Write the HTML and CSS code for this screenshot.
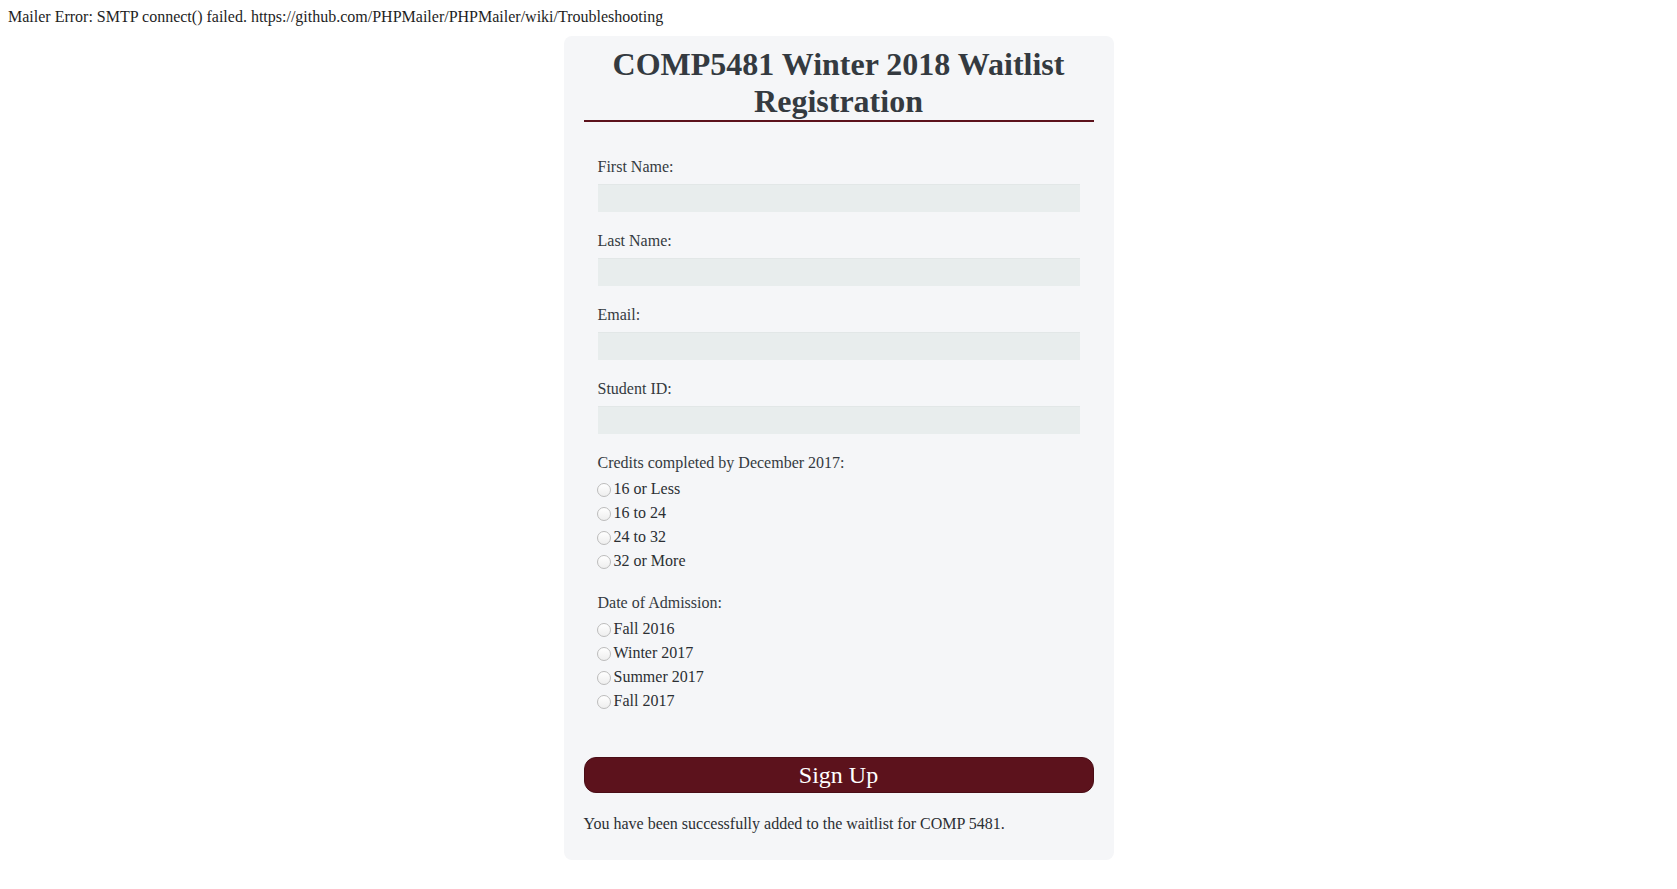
FILE: index.html
```html
<!DOCTYPE html>
<html lang="en">
<head>
<meta charset="utf-8">
<title>COMP5481 Winter 2018 Waitlist Registration</title>
<link rel="stylesheet" href="styles.css">
</head>
<body>
<div class="error">Mailer Error: SMTP connect() failed. https://github.com/PHPMailer/PHPMailer/wiki/Troubleshooting</div>
<div class="card">
  <h1 class="title">COMP5481 Winter 2018 Waitlist Registration</h1>
  <form class="form">
    <div class="fields">
      <label class="field-label" for="fn">First Name:</label>
      <input class="text-input" id="fn" type="text">
      <label class="field-label" for="ln">Last Name:</label>
      <input class="text-input" id="ln" type="text">
      <label class="field-label" for="em">Email:</label>
      <input class="text-input" id="em" type="text">
      <label class="field-label" for="sid">Student ID:</label>
      <input class="text-input" id="sid" type="text">

      <div class="group-label">Credits completed by December 2017:</div>
      <div class="radio-group">
        <label class="radio-row"><input class="radio" type="radio" name="credits">16 or Less</label>
        <label class="radio-row"><input class="radio" type="radio" name="credits">16 to 24</label>
        <label class="radio-row"><input class="radio" type="radio" name="credits">24 to 32</label>
        <label class="radio-row"><input class="radio" type="radio" name="credits">32 or More</label>
      </div>

      <div class="group-label">Date of Admission:</div>
      <div class="radio-group">
        <label class="radio-row"><input class="radio" type="radio" name="adm">Fall 2016</label>
        <label class="radio-row"><input class="radio" type="radio" name="adm">Winter 2017</label>
        <label class="radio-row"><input class="radio" type="radio" name="adm">Summer 2017</label>
        <label class="radio-row"><input class="radio" type="radio" name="adm">Fall 2017</label>
      </div>
    </div>
    <button class="submit" type="button">Sign Up</button>
  </form>
  <p class="success">You have been successfully added to the waitlist for COMP 5481.</p>
</div>
</body>
</html>
```

FILE: styles.css
```css
html, body {
  margin: 0;
  padding: 0;
  background: #ffffff;
}

body {
  padding: 8px;
  font-family: "Liberation Serif", "Times New Roman", serif;
  font-size: 16px;
  color: #1e1e1e;
}

.error {
  line-height: 18px;
  height: 18px;
}

.card {
  width: 550px;
  box-sizing: border-box;
  margin: 10px auto 0;
  padding: 10px 20px 24px;
  background: #f5f6f8;
  border-radius: 8px;
  color: #343a40;
}

.title {
  margin: 0;
  font-size: 32px;
  line-height: 37px;
  font-weight: bold;
  text-align: center;
  color: #343a40;
  border-bottom: 2px solid #5c121c;
}

.form {
  margin: 0;
  display: flex;
  flex-direction: column;
}

.fields {
  display: flex;
  flex-direction: column;
  padding: 33px 14px 0;
}

.field-label {
  display: block;
  line-height: 24px;
}

.text-input {
  display: block;
  height: 28px;
  box-sizing: border-box;
  margin: 5px 0 17px;
  padding: 0 6px;
  border: none;
  border-top: 1px solid #e2e7e7;
  background: #e8eded;
  font-family: inherit;
  font-size: 16px;
  outline: none;
}

.group-label {
  line-height: 24px;
  margin-bottom: 2px;
}

.radio-group {
  display: flex;
  flex-direction: column;
  margin-bottom: 18px;
}

.radio-group:last-child {
  margin-bottom: 17px;
}

.radio-row {
  display: flex;
  align-items: center;
  height: 24px;
  line-height: 24px;
  color: #2b2f33;
}

.radio {
  appearance: none;
  -webkit-appearance: none;
  width: 14px;
  height: 14px;
  margin: 2px 3px 0 -1px;
  border: 1px solid #bcbcbc;
  border-radius: 50%;
  background: linear-gradient(#ffffff, #eeeeee);
  box-sizing: border-box;
  flex: none;
}

.submit {
  display: block;
  width: 100%;
  height: 36px;
  margin-top: 27px;
  border: 1px solid #4a0d16;
  border-radius: 12px;
  background: #5c121c;
  color: #ffffff;
  font-family: "Liberation Serif", "Times New Roman", serif;
  font-size: 24px;
  line-height: 32px;
  padding: 0;
  cursor: pointer;
}

.success {
  margin: 19px 0 0;
  line-height: 24px;
  color: #2b2f33;
}
```
